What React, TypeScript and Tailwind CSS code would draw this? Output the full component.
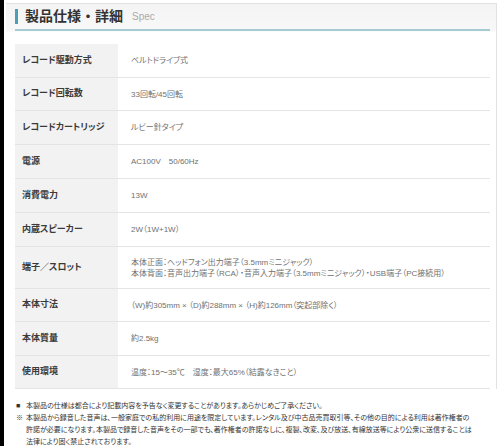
const specs: { label: string; value: string[]; h: string }[] = [
  { label: "レコード駆動方式", value: ["ベルトドライブ式"], h: "h-[34px]" },
  { label: "レコード回転数", value: ["33回転/45回転"], h: "h-[33px]" },
  { label: "レコードカートリッジ", value: ["ルビー針タイプ"], h: "h-[34px]" },
  { label: "電源", value: ["AC100V　50/60Hz"], h: "h-[34px]" },
  { label: "消費電力", value: ["13W"], h: "h-[34px]" },
  { label: "内蔵スピーカー", value: ["2W（1W+1W）"], h: "h-[34px]" },
  {
    label: "端子／スロット",
    value: [
      "本体正面：ヘッドフォン出力端子（3.5mmミニジャック）",
      "本体背面：音声出力端子（RCA）・音声入力端子（3.5mmミニジャック）・USB端子（PC接続用）",
    ],
    h: "h-[42px]",
  },
  { label: "本体寸法", value: ["（W)約305mm × （D)約288mm × （H)約126mm（突起部除く）"], h: "h-[33px]" },
  { label: "本体質量", value: ["約2.5kg"], h: "h-[34px]" },
  { label: "使用環境", value: ["温度：15～35℃　湿度：最大65%（結露なきこと）"], h: "h-[33px]" },
];

function SpecRow({ label, value, h }: { label: string; value: string[]; h: string }) {
  return (
    <div className={`flex ${h} border-b border-[#e4e4e4]`}>
      <div className="w-[103px] shrink-0 bg-[#f2f2f2] pl-[7px] flex items-center text-[9px] font-bold text-[#3a3a3a]">
        {label}
      </div>
      <div className="flex-1 pl-[13px] flex flex-col justify-center text-[8px] leading-[11px] text-[#707070] whitespace-nowrap">
        {value.map((v) => (
          <div key={v}>{v}</div>
        ))}
      </div>
    </div>
  );
}

export default function App() {
  return (
    <div
      className="w-[500px] h-[446px] flex bg-white overflow-hidden"
      style={{ fontFamily: '"Liberation Sans", "Noto Sans CJK JP", sans-serif' }}
    >
      <div className="w-[4px] shrink-0 bg-black" />
      <div className="flex-1 pl-[2px] pt-[3px]">
        {/* card */}
        <div className="mr-[3px] border-t border-r border-[#e2e2e2] bg-gradient-to-b from-[#f4f4f4] via-[#f8f8f8] from-0% via-[27px] to-white to-[28px]">
          <div className="ml-[9px] mr-[6px] h-[27px] flex items-center border-b-2 border-[#a6ccd3]">
            <div className="w-[3px] h-[15px] bg-[#4a9fb4]" />
            <div className="ml-[7px] text-[14px] font-bold text-[#333]">製品仕様・詳細</div>
            <div className="ml-[9px] text-[10px] text-[#aaa]">Spec</div>
          </div>

          <div className="ml-[9px] mr-[6px] mt-[13px] [font-feature-settings:'palt']">
            {specs.map((s) => (
              <SpecRow key={s.label} {...s} />
            ))}
          </div>
        </div>

        {/* notes */}
        <div className="ml-[10px] mt-[11px] text-[7px] leading-[12px] text-[#333] whitespace-nowrap [font-feature-settings:'palt']">
          <div className="flex">
            <span className="w-[10px] shrink-0">■</span>
            <span>本製品の仕様は都合により記載内容を予告なく変更することがあります。あらかじめご了承ください。</span>
          </div>
          <div className="flex">
            <span className="w-[10px] shrink-0">※</span>
            <span>
              本製品から録音した音声は、一般家庭での私的利用に用途を限定しています。レンタル及び中古品売買取引等、その他の目的による利用は著作権者の
              <br />
              許諾が必要になります。本製品で録音した音声をその一部でも、著作権者の許諾なしに、複製、改変、及び放送、有線放送等により公衆に送信することは
              <br />
              法律により固く禁止されております。
            </span>
          </div>
        </div>
      </div>
    </div>
  );
}
